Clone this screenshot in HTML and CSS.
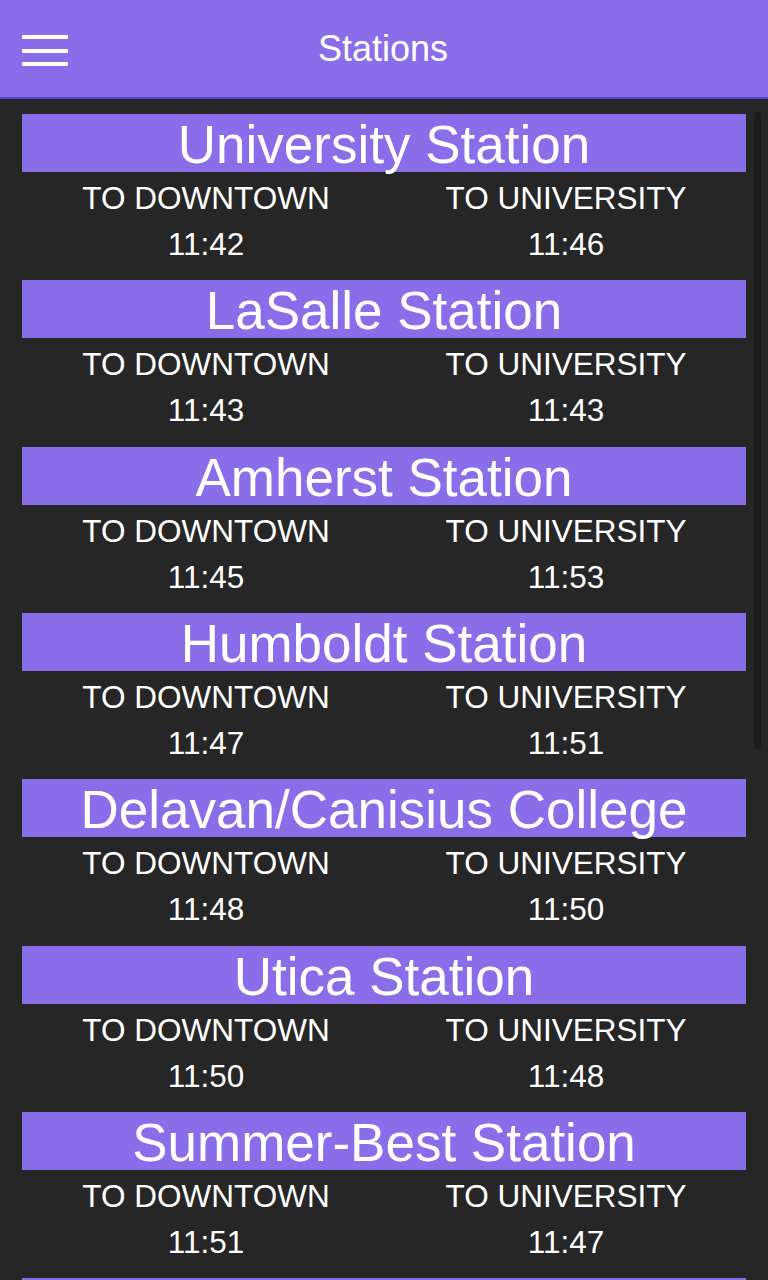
FILE: index.html
```html
<!DOCTYPE html>
<html lang="en">
<head>
  <meta charset="UTF-8">
  <meta name="viewport" content="width=device-width, initial-scale=1.0">
  <title>Stations</title>
  <link rel="stylesheet" href="styles.css">
</head>
<body>
  <header class="topbar">
    <button class="menu-btn" aria-label="Menu">
      <span></span><span></span><span></span>
    </button>
    <h1 class="topbar-title">Stations</h1>
    <div></div>
  </header>

  <main class="station-list">
    <section class="station">
      <h2 class="station-name">University Station</h2>
      <div class="times">
        <div class="col"><p>TO DOWNTOWN</p><p>11:42</p></div>
        <div class="col"><p>TO UNIVERSITY</p><p>11:46</p></div>
      </div>
    </section>
    <section class="station">
      <h2 class="station-name">LaSalle Station</h2>
      <div class="times">
        <div class="col"><p>TO DOWNTOWN</p><p>11:43</p></div>
        <div class="col"><p>TO UNIVERSITY</p><p>11:43</p></div>
      </div>
    </section>
    <section class="station">
      <h2 class="station-name">Amherst Station</h2>
      <div class="times">
        <div class="col"><p>TO DOWNTOWN</p><p>11:45</p></div>
        <div class="col"><p>TO UNIVERSITY</p><p>11:53</p></div>
      </div>
    </section>
    <section class="station">
      <h2 class="station-name">Humboldt Station</h2>
      <div class="times">
        <div class="col"><p>TO DOWNTOWN</p><p>11:47</p></div>
        <div class="col"><p>TO UNIVERSITY</p><p>11:51</p></div>
      </div>
    </section>
    <section class="station">
      <h2 class="station-name">Delavan/Canisius College</h2>
      <div class="times">
        <div class="col"><p>TO DOWNTOWN</p><p>11:48</p></div>
        <div class="col"><p>TO UNIVERSITY</p><p>11:50</p></div>
      </div>
    </section>
    <section class="station">
      <h2 class="station-name">Utica Station</h2>
      <div class="times">
        <div class="col"><p>TO DOWNTOWN</p><p>11:50</p></div>
        <div class="col"><p>TO UNIVERSITY</p><p>11:48</p></div>
      </div>
    </section>
    <section class="station">
      <h2 class="station-name">Summer-Best Station</h2>
      <div class="times">
        <div class="col"><p>TO DOWNTOWN</p><p>11:51</p></div>
        <div class="col"><p>TO UNIVERSITY</p><p>11:47</p></div>
      </div>
    </section>
    <section class="station">
      <h2 class="station-name">Allen/Medical Campus</h2>
      <div class="times">
        <div class="col"><p>TO DOWNTOWN</p><p>11:53</p></div>
        <div class="col"><p>TO UNIVERSITY</p><p>11:45</p></div>
      </div>
    </section>
  </main>

  <div class="scrollbar"></div>
</body>
</html>
```

FILE: styles.css
```css
body {
  font-family: "Liberation Sans", Arial, sans-serif;
  background-color: #262626;
  color: #fff;
  margin: 0;
  padding: 0;
  overflow: hidden;
}
.topbar {
  display: grid;
  grid-template-columns: 1fr auto 1fr;
  align-items: center;
  height: 97px;
  background-color: #8a6de8;
  border-bottom: 2px solid #5b3fdc;
}
.menu-btn {
  display: flex;
  flex-direction: column;
  gap: 9.5px;
  width: 46px;
  margin: 4px 0 0 22px;
  padding: 0;
  background: none;
  border: none;
}
.menu-btn span {
  display: block;
  height: 4px;
  background-color: #fff;
  border-radius: 1px;
}
.topbar-title {
  margin: 0 2px 0 0;
  font-size: 36px;
  font-weight: normal;
}
.station-list {
  display: flex;
  flex-direction: column;
  gap: 13.33px;
  padding: 15px 22px 0 22px;
}
.station-name {
  height: 58px;
  margin: 0;
  background-color: #8a6de8;
  font-size: 53px;
  font-weight: normal;
  line-height: 61px;
  text-align: center;
  white-space: nowrap;
}
.times {
  display: grid;
  grid-template-columns: 1fr 1fr;
  padding: 3px 0 0 4px;
}
.col {
  text-align: center;
}
.col p {
  margin: 0;
  font-size: 31.5px;
  line-height: 46px;
}
.scrollbar {
  position: fixed;
  top: 112px;
  right: 7px;
  width: 7px;
  height: 637px;
  border-radius: 4px;
  background-color: #1c1c1c;
}
```
